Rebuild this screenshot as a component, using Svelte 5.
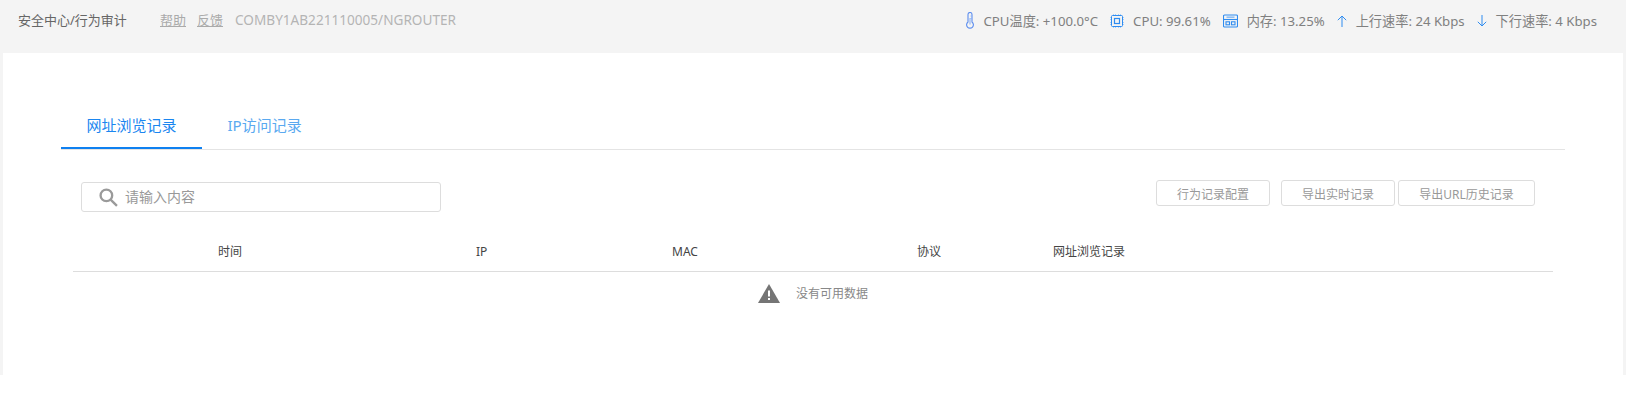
<script>
  const stats = [
    { icon: 'temp', text: 'CPU温度: +100.0°C' },
    { icon: 'cpu', text: 'CPU: 99.61%' },
    { icon: 'mem', text: '内存: 13.25%' },
    { icon: 'up', text: '上行速率: 24 Kbps' },
    { icon: 'down', text: '下行速率: 4 Kbps' }
  ]
  const columns = ['时间', 'IP', 'MAC', '协议', '网址浏览记录']
  const actions = ['行为记录配置', '导出实时记录', '导出URL历史记录']
</script>

<div class="shell">
  <header class="topbar">
    <span class="crumb">安全中心/行为审计</span>
    <a class="link" href="#help">帮助</a>
    <a class="link" href="#feedback">反馈</a>
    <span class="device">COMBY1AB221110005/NGROUTER</span>
    <div class="stats">
      {#each stats as s}
        <div class="stat">
          {#if s.icon === 'temp'}
            <svg width="10" height="17" viewBox="0 0 10 17" fill="none" stroke="#5b8def" stroke-width="1.1">
              <path d="M3 10V2.5a2 2 0 0 1 4 0V10a3.4 3.4 0 1 1-4 0z" />
              <path d="M5 6v6.5" stroke="#8fb4f5" />
              <path d="M7 4h-1.5M7 6.5h-1.5" stroke="#8fb4f5" />
            </svg>
          {:else if s.icon === 'cpu'}
            <svg width="14" height="14" viewBox="0 0 14 14" fill="none" stroke="#2f8cf0">
              <path d="M3.5 0v14M5.5 0v14M8.5 0v14M10.5 0v14M0 3.5h14M0 5.5h14M0 8.5h14M0 10.5h14" stroke="#a9cff7" />
              <rect x="1.5" y="1.5" width="11" height="11" rx="1" fill="#f4f4f4" />
              <rect x="4.5" y="4.5" width="5" height="5" stroke-width="1.2" />
            </svg>
          {:else if s.icon === 'mem'}
            <svg width="15" height="14" viewBox="0 0 15 14" fill="none" stroke="#2f8cf0" stroke-width="1.1">
              <rect x="0.5" y="1" width="14" height="12" rx="1" />
              <path d="M3.5 3.2h8" stroke="#8fc0f5" stroke-width="1.6" />
              <path d="M1 5.5h13" />
              <rect x="3" y="7.8" width="3.5" height="3" />
              <rect x="8.5" y="7.8" width="3.5" height="3" />
            </svg>
          {:else if s.icon === 'up'}
            <svg width="10" height="12" viewBox="0 0 10 12" fill="none" stroke="#2f8cf0">
              <path d="M5 12V1M0.8 5.2 5 1l4.2 4.2" />
            </svg>
          {:else}
            <svg width="10" height="12" viewBox="0 0 10 12" fill="none" stroke="#2f8cf0">
              <path d="M5 0v11M0.8 6.8 5 11l4.2-4.2" />
            </svg>
          {/if}
          <span>{s.text}</span>
        </div>
      {/each}
    </div>
  </header>

  <main class="card">
    <nav class="tabs">
      <a class="tab active" href="#url">网址浏览记录</a>
      <a class="tab" href="#ip">IP访问记录</a>
    </nav>

    <div class="toolbar">
      <label class="search">
        <svg width="19" height="19" viewBox="0 0 18 18" fill="none" stroke="#9a9a9a" stroke-width="2.2">
          <circle cx="7" cy="7" r="5.5" />
          <path d="M11 11l6 6" />
        </svg>
        <input placeholder="请输入内容" />
      </label>
      <div class="actions">
        {#each actions as a}
          <button>{a}</button>
        {/each}
      </div>
    </div>

    <div class="table">
      <div class="thead">
        {#each columns as c}
          <span>{c}</span>
        {/each}
      </div>
      <div class="empty">
        <svg width="22" height="19" viewBox="0 0 22 19">
          <path d="M11 0 22 19H0z" fill="#757575" />
          <rect x="10" y="6.5" width="2" height="6" fill="#fff" />
          <rect x="10" y="14" width="2" height="2" fill="#fff" />
        </svg>
        <span>没有可用数据</span>
      </div>
    </div>
  </main>
</div>

<style>
  :global(body) {
    background: #fff;
    font-family: "Noto Sans", "Noto Sans CJK SC", sans-serif;
  }

  .shell {
    height: 375px;
    padding: 0 3px;
    box-sizing: border-box;
    background: #f4f4f4;
    overflow: hidden;
  }

  .topbar {
    display: flex;
    align-items: center;
    height: 53px;
    padding: 0 26px 12px 15px;
    box-sizing: border-box;
    font-size: 13px;
  }

  .crumb {
    width: 142px;
    margin-top: -2px;
    color: #666;
  }

  .link {
    margin-top: -2px;
    margin-right: 11px;
    color: #aaa;
    text-decoration: underline;
  }

  .link:nth-of-type(2) {
    margin-right: 12px;
  }

  .device {
    margin-top: -3px;
    font-size: 13.6px;
    color: #b4b4b4;
  }

  .stats {
    display: flex;
    align-items: center;
    gap: 12px;
    margin-left: auto;
    font-size: 13.2px;
    color: #808080;
  }

  .stat {
    display: flex;
    align-items: center;
    gap: 9px;
  }

  .card {
    height: 322px;
    padding: 47px 58px 0;
    box-sizing: border-box;
    background: #fff;
  }

  .tabs {
    display: flex;
    border-bottom: 1px solid #e4e4e4;
  }

  .tab {
    height: 49px;
    padding: 0 25.5px;
    box-sizing: border-box;
    font-size: 15px;
    line-height: 50px;
    color: #5aa9f0;
    text-decoration: none;
  }

  .tab.active {
    color: #1a86f0;
    border-bottom: 2px solid #0f80f0;
  }

  .toolbar {
    display: flex;
    justify-content: space-between;
    align-items: flex-start;
    margin-top: 30px;
    padding: 0 30px 0 20px;
  }

  .search {
    display: flex;
    align-items: center;
    gap: 7px;
    width: 360px;
    height: 30px;
    margin-top: 2px;
    padding-left: 17px;
    box-sizing: border-box;
    border: 1px solid #ddd;
    border-radius: 3px;
  }

  .search input {
    flex: 1;
    min-width: 0;
    margin-top: -2px;
    border: none;
    outline: none;
    padding: 0;
    font: 14px "Noto Sans", "Noto Sans CJK SC", sans-serif;
  }

  .search input::placeholder {
    color: #999;
  }

  .actions {
    display: flex;
    gap: 3px;
  }

  button {
    width: 114px;
    height: 26px;
    padding: 2px 0 0;
    background: #fff;
    border: 1px solid #ddd;
    border-radius: 3px;
    font: 12px "Noto Sans", "Noto Sans CJK SC", sans-serif;
    color: #999;
  }

  button:first-child {
    margin-right: 8px;
  }

  button:last-child {
    width: 137px;
  }

  .table {
    margin: 20px 12px 0;
  }

  .thead {
    display: grid;
    grid-template-columns: 258px 196px 245px 136px 1fr;
    align-items: center;
    height: 40px;
    padding: 0 0 1px 145px;
    box-sizing: border-box;
    border-bottom: 1px solid #ddd;
    font-size: 12px;
    color: #444;
  }

  .empty {
    display: flex;
    align-items: center;
    justify-content: center;
    gap: 16px;
    height: 42px;
    font-size: 12px;
    color: #888;
  }
</style>
